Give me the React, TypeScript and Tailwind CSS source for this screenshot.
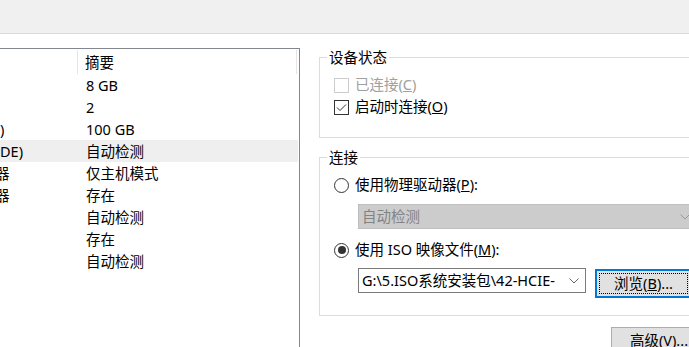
import React from 'react'

const FONT = 'font-["Noto_Sans","Noto_Sans_CJK_SC",sans-serif]'

type Row = { name: string; nameClass?: string; value: string; selected?: boolean }

// first column is cut off by the window edge, only the tails show
const ROWS: Row[] = [
  { name: '', value: '8 GB' },
  { name: '', value: '2' },
  { name: ')', value: '100 GB' },
  { name: 'DE)', value: '自动检测', selected: true },
  { name: '器', nameClass: '-ml-[5px]', value: '仅主机模式' },
  { name: '器', nameClass: '-ml-[5px]', value: '存在' },
  { name: '', value: '自动检测' },
  { name: '', value: '存在' },
  { name: '', value: '自动检测' },
]

function Chevron({ color = '#333' }: { color?: string }) {
  return (
    <svg width="10" height="6" viewBox="0 0 10 6" className="shrink-0">
      <path d="M0.5 0.5 L5 5 L9.5 0.5" fill="none" stroke={color} strokeWidth="1" />
    </svg>
  )
}

function CheckBox({ checked, disabled, children }: { checked?: boolean; disabled?: boolean; children: React.ReactNode }) {
  return (
    <div className="flex items-center h-[22px]">
      <div
        className={`w-[15px] h-[15px] border flex items-center justify-center bg-white ${
          disabled ? 'border-[#cccccc]' : 'border-[#333333]'
        }`}
      >
        {checked && (
          <svg width="13" height="13" viewBox="0 0 13 13">
            <path d="M2 6.5 L5 9.5 L11 3.5" fill="none" stroke="#333" strokeWidth="1" />
          </svg>
        )}
      </div>
      <span className={`ml-[6px] ${disabled ? 'text-[#a0a0a0]' : 'text-black'}`}>{children}</span>
    </div>
  )
}

function Radio({ checked, children }: { checked?: boolean; children: React.ReactNode }) {
  return (
    <div className="flex items-center h-[22px]">
      <div className="w-[15px] h-[15px] rounded-full border border-[#333333] bg-white flex items-center justify-center">
        {checked && <div className="w-[8px] h-[8px] rounded-full bg-[#333333]" />}
      </div>
      <span className="ml-[6px] text-black">{children}</span>
    </div>
  )
}

function Group({ title, children, className }: { title: string; children: React.ReactNode; className?: string }) {
  return (
    <fieldset className={`border border-[#dcdcdc] p-0 m-0 ${className ?? ''}`}>
      <legend className="ml-[7px] px-[2px] leading-[20px] text-black">{title}</legend>
      <div className="pl-[14px]">{children}</div>
    </fieldset>
  )
}

export default function App() {
  return (
    <div className={`w-[689px] h-[347px] overflow-hidden bg-white text-[14.5px] text-black ${FONT}`}>
      {/* tab strip */}
      <div className="h-[34px] bg-[#f0f0f0] border-b border-[#dadada]" />

      <div className="flex">
        {/* device list */}
        <div className="mt-[14px] w-[300px] h-[320px] shrink-0 border-y border-r border-[#828790]">
          <div className="flex h-[25px] items-center">
            <div className="w-[78px] h-[24px] border-r border-[#e5e5e5]" />
            <div className="w-[219px] h-[24px] border-r border-[#e5e5e5] pl-[7px] leading-[24px]">摘要</div>
          </div>
          {ROWS.map((r, i) => (
            <div key={i} className={`flex h-[22px] leading-[22px] w-[298px] ${r.selected ? 'bg-[#efefef]' : ''}`}>
              <div className="w-[79px] overflow-hidden whitespace-nowrap">
                <span className={`inline-block ${r.nameClass ?? ''}`}>{r.name}</span>
              </div>
              <div className="pl-[7px]">{r.value}</div>
            </div>
          ))}
        </div>

        {/* right column */}
        <div className="ml-[19px] w-[390px] shrink-0">
          <Group title="设备状态" className="mt-[13px] h-[91px]">
            <div className="pt-[7px]">
              <CheckBox disabled>
                已连接(<span className="underline">C</span>)
              </CheckBox>
              <CheckBox checked>
                启动时连接(<span className="underline">O</span>)
              </CheckBox>
            </div>
          </Group>

          <Group title="连接" className="mt-[9px] h-[169px]">
            <div className="pt-[7px]">
              <Radio>
                使用物理驱动器(<span className="underline">P</span>):
              </Radio>
              <div className="ml-[24px] mt-[8px] mr-[11px] h-[25px] bg-[#cccccc] border border-[#bfbfbf] flex items-center justify-between pl-[3px] pr-[6px] text-[#838383]">
                <span>自动检测</span>
                <Chevron color="#999" />
              </div>
              <div className="mt-[10px]">
                <Radio checked>
                  使用 ISO 映像文件(<span className="underline">M</span>):
                </Radio>
              </div>
              <div className="mt-[7px] ml-[24px] flex items-start">
                <div className="w-[228px] h-[25px] border border-[#7a7a7a] bg-white flex items-center justify-between pl-[3px] pr-[6px] whitespace-nowrap overflow-hidden">
                  <span>G:\5.ISO系统安装包\42-HCIE-</span>
                  <Chevron color="#666" />
                </div>
                <div className="ml-[9px] mt-[1px] w-[97px] h-[29px] border-2 border-[#0078d7] bg-[#e1e1e1] p-[2px]">
                  <div className="w-full h-full border border-dotted border-black flex items-center justify-center">
                    浏览(<span className="underline">B</span>)...
                  </div>
                </div>
              </div>
            </div>
          </Group>

          <div className="mt-[11px] ml-[292px] w-[96px] h-[28px] border border-[#adadad] bg-[#e1e1e1] flex items-center justify-center">
            高级(<span className="underline">V</span>)...
          </div>
        </div>
      </div>
    </div>
  )
}
